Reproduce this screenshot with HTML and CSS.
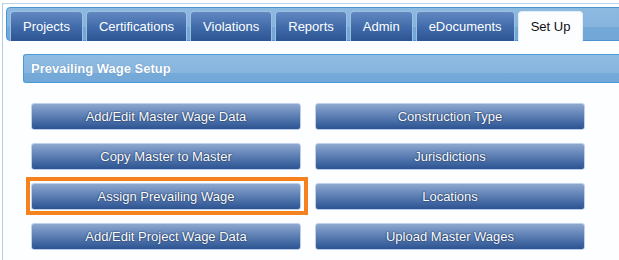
FILE: index.html
```html
<!DOCTYPE html>
<html lang="en">
<head>
    <meta charset="UTF-8">
    <meta name="viewport" content="width=device-width, initial-scale=1">
    <title>Prevailing Wage Setup</title>
    <link rel="stylesheet" href="styles.css">
</head>
<body>
    <div class="frame">
        <ul class="tabs">
            <li class="tab">Projects</li>
            <li class="tab">Certifications</li>
            <li class="tab">Violations</li>
            <li class="tab">Reports</li>
            <li class="tab">Admin</li>
            <li class="tab">eDocuments</li>
            <li class="tab active">Set Up</li>
        </ul>
        <div class="panel">
            <div class="panel-header">Prevailing Wage Setup</div>
            <div class="button-grid">
                <button class="wage-btn">Add/Edit Master Wage Data</button>
                <button class="wage-btn">Construction Type</button>
                <button class="wage-btn">Copy Master to Master</button>
                <button class="wage-btn">Jurisdictions</button>
                <button class="wage-btn highlight">Assign Prevailing Wage</button>
                <button class="wage-btn">Locations</button>
                <button class="wage-btn">Add/Edit Project Wage Data</button>
                <button class="wage-btn">Upload Master Wages</button>
            </div>
        </div>
    </div>
</body>
</html>
```

FILE: styles.css
```css
body {
    font-family: "Liberation Sans", Arial, sans-serif;
    margin: 0;
    padding: 0;
    background-color: #ffffff;
    overflow: hidden;
}

.frame {
    margin: 3px 0 0 2px;
    width: 640px;
    height: 253px;
    border-top: 1px solid #bcd3ea;
    border-left: 1px solid #aecbe8;
    padding: 3px 0 0 3px;
    background-color: #fdfeff;
}

.tabs {
    display: flex;
    align-items: flex-end;
    gap: 3px;
    list-style: none;
    margin: 0;
    height: 29px;
    padding: 3px 0 0 3px;
    border: 1px solid #4b93d3;
    border-radius: 4px;
    background: linear-gradient(#8dbae1 0, #86b4dd 58%, #74a8d7 58%, #72a6d6 100%);
}

.tab {
    height: 29px;
    line-height: 29px;
    margin-bottom: -1px;
    padding: 0 12px;
    border: 1px solid #9cbfe2;
    border-bottom: none;
    border-radius: 4px 4px 0 0;
    background: linear-gradient(#6288c0, #3f69a8 55%, #2d5594);
    color: #ffffff;
    font-size: 13px;
}

.tab.active {
    height: 30px;
    margin-bottom: -2px;
    border-color: #e4eef8;
    background: #fbfdff;
    color: #111111;
}

.panel {
    padding: 13px 0 0 17px;
}

.panel-header {
    height: 27px;
    line-height: 27px;
    padding-left: 7px;
    border: 1px solid #4a99d8;
    border-right: none;
    border-radius: 3px 0 0 3px;
    background: linear-gradient(#8fbce2 0, #86b5de 66%, #76aad9 66%, #72a7d7 100%);
    color: #ffffff;
    font-size: 13px;
    font-weight: bold;
    text-shadow: 0 0 1px #4f7fb0;
}

.button-grid {
    display: grid;
    grid-template-columns: 270px 270px;
    column-gap: 14px;
    row-gap: 13px;
    margin: 20px 0 0 8px;
}

.wage-btn {
    position: relative;
    height: 27px;
    padding: 0;
    border: 1px solid #bfd1ea;
    border-radius: 3px;
    background: linear-gradient(#8ea8cf, #5a7db2 50%, #2c5392);
    color: #ffffff;
    font-family: "Liberation Sans", Arial, sans-serif;
    font-size: 13px;
    text-shadow: 0 0 1px #1c3561, 0 0 2px #1c3561;
    cursor: pointer;
}

.wage-btn.highlight::after {
    content: "";
    position: absolute;
    left: -6px;
    top: -7px;
    right: -8px;
    bottom: -6px;
    border: 4px solid #f5821f;
}
```
